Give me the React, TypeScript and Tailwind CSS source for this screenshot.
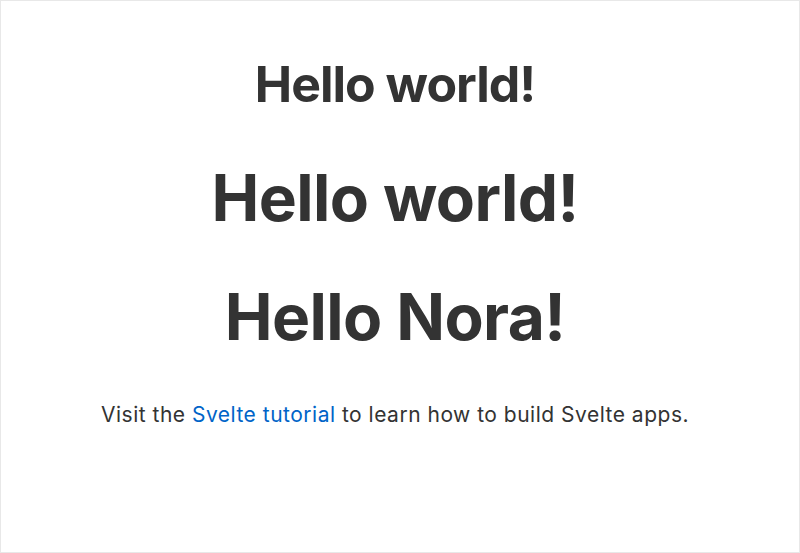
export default function App() {
    return (
        <div className="h-[553px] w-[800px] border border-[#e8e8e8] bg-white text-[#333] font-['Inter','Liberation_Sans',sans-serif]">
            <main className="flex flex-col items-center pt-[55px] pr-[10px] text-center">
                <h1 className="text-[50px] leading-[56px] font-bold tracking-[-1px]">Hello world!</h1>
                <h1 className="mt-[50px] text-[64px] leading-[72px] font-bold tracking-[-0.6px]">Hello world!</h1>
                <h1 className="mt-[47px] text-[64px] leading-[72px] font-bold tracking-[-0.6px]">Hello Nora!</h1>
                <p className="mt-[48px] text-[21px] leading-[28px] tracking-[0.5px]">
                    Visit the <a href="#" className="text-[#0064c8]">Svelte tutorial</a> to learn how to build Svelte apps.
                </p>
            </main>
        </div>
    );
}
